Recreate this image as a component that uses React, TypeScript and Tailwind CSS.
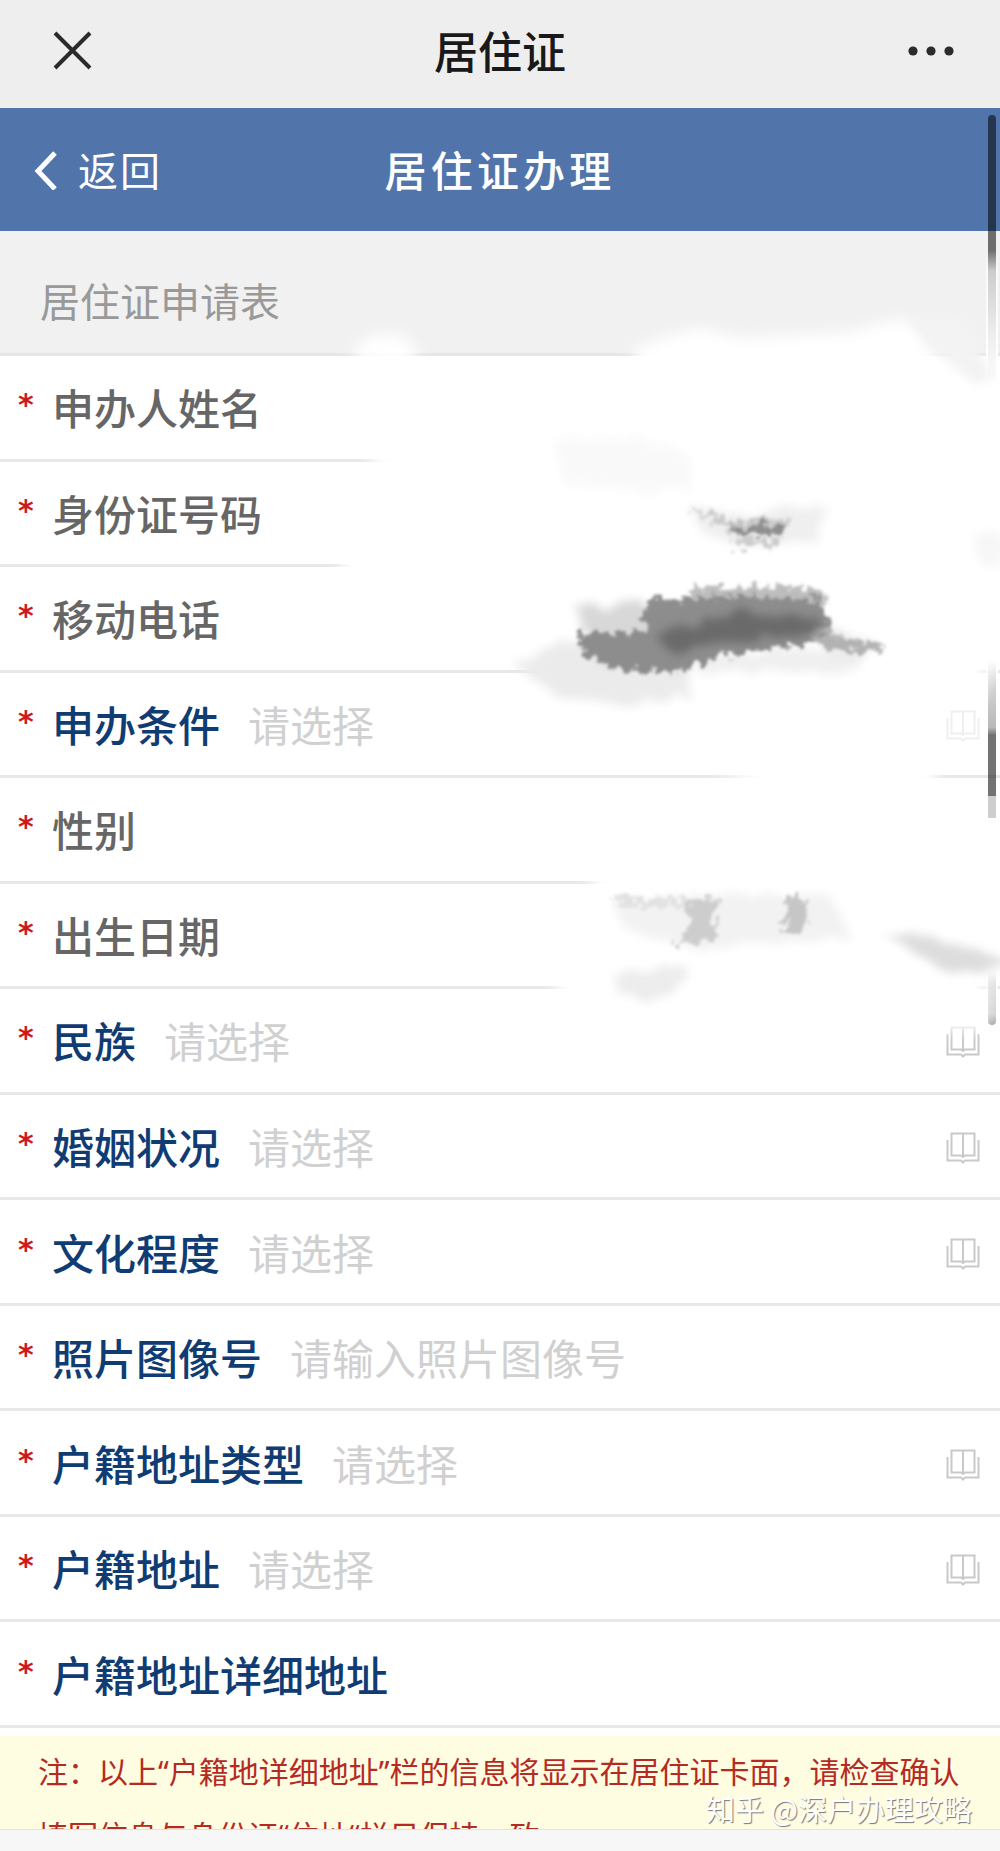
type Field = {
  id: string;
  label: string;
  kind: "readonly" | "select" | "text";
  placeholder?: string;
};

const fields: Field[] = [
  { id: "name", label: "申办人姓名", kind: "readonly" },
  { id: "idNumber", label: "身份证号码", kind: "readonly" },
  { id: "phone", label: "移动电话", kind: "readonly" },
  { id: "condition", label: "申办条件", kind: "select" },
  { id: "gender", label: "性别", kind: "readonly" },
  { id: "birthday", label: "出生日期", kind: "readonly" },
  { id: "nation", label: "民族", kind: "select" },
  { id: "marriage", label: "婚姻状况", kind: "select" },
  { id: "education", label: "文化程度", kind: "select" },
  {
    id: "photoNumber",
    label: "照片图像号",
    kind: "text",
    placeholder: "请输入照片图像号",
  },
  { id: "addressType", label: "户籍地址类型", kind: "select" },
  { id: "address", label: "户籍地址", kind: "select" },
  { id: "addressDetail", label: "户籍地址详细地址", kind: "text" },
];

const BookIcon = () => (
  <svg
    viewBox="0 0 34 32"
    className="mt-1 h-8 w-[34px] shrink-0"
    fill="none"
    stroke="#c9c9c9"
    strokeWidth="2"
    aria-hidden="true"
  >
    <path d="M5.5 1.5H28.5V23.5H19L17 25L15 23.5H5.5Z" />
    <path d="M17 1.5V25" />
    <path d="M1.5 8V28.5H15L17 30.5L19 28.5H32.5V8" />
  </svg>
);

const FieldRow = ({ field }: { field: Field }) => {
  const labelColor =
    field.kind === "readonly" ? "text-[#666666]" : "text-[#103c74]";

  return (
    <div className="flex min-h-24 flex-1 items-center border-b-3 border-[#e8e8e8] pl-[18px] pr-5">
      <span className="w-[34px] shrink-0 pb-1 font-['DejaVu_Sans',sans-serif] text-3xl font-bold text-[#cc1a1a]">
        *
      </span>
      <label
        htmlFor={field.id}
        className={`shrink-0 text-[42px] font-medium leading-none ${labelColor}`}
      >
        {field.label}
      </label>
      {field.kind === "select" ? (
        <select
          id={field.id}
          defaultValue=""
          className="ml-7 h-16 min-w-0 flex-1 appearance-none bg-transparent pb-0.5 text-[42px] text-[#d0d0d0] outline-none"
        >
          <option value="">请选择</option>
        </select>
      ) : (
        <input
          id={field.id}
          type="text"
          readOnly={field.kind === "readonly"}
          placeholder={field.placeholder}
          className="ml-7 h-16 min-w-0 flex-1 bg-transparent pb-0.5 text-[42px] text-[#666666] outline-none placeholder:text-[#d0d0d0]"
        />
      )}
      {field.kind === "select" && <BookIcon />}
    </div>
  );
};

/* Brush strokes that hide the applicant's personal data */
const BrushMarks = () => (
  <svg
    viewBox="0 0 1000 1851"
    preserveAspectRatio="none"
    className="pointer-events-none absolute inset-0 h-full w-full"
    aria-hidden="true"
  >
    <defs>
      <filter id="soft" x="-20%" y="-20%" width="140%" height="140%">
        <feGaussianBlur stdDeviation="7" />
      </filter>
      <filter id="haze" x="-20%" y="-30%" width="140%" height="160%">
        <feTurbulence type="fractalNoise" baseFrequency="0.05" numOctaves="3" />
        <feDisplacementMap in="SourceGraphic" scale="18" />
        <feGaussianBlur stdDeviation="5" />
      </filter>
      <filter id="rough" x="-20%" y="-30%" width="140%" height="160%">
        <feTurbulence type="fractalNoise" baseFrequency="0.12" numOctaves="4" />
        <feDisplacementMap
          in="SourceGraphic"
          scale="22"
          xChannelSelector="R"
          yChannelSelector="G"
        />
        <feGaussianBlur stdDeviation="1.6" />
      </filter>
      <linearGradient id="thumbFade" x1="0" y1="250" x2="0" y2="390" gradientUnits="userSpaceOnUse">
        <stop offset="0" stopColor="#fff" stopOpacity="0" />
        <stop offset="0.15" stopColor="#fff" stopOpacity="0.65" />
        <stop offset="0.6" stopColor="#fff" stopOpacity="0.88" />
        <stop offset="1" stopColor="#fff" />
      </linearGradient>
      <linearGradient id="thumbReturn" x1="0" y1="660" x2="0" y2="735" gradientUnits="userSpaceOnUse">
        <stop offset="0" stopColor="#fff" />
        <stop offset="0.4" stopColor="#fff" stopOpacity="0.65" />
        <stop offset="0.9" stopColor="#fff" stopOpacity="0.5" />
        <stop offset="1" stopColor="#fff" stopOpacity="0" />
      </linearGradient>
      <linearGradient id="thumbEnd" x1="0" y1="965" x2="0" y2="1026" gradientUnits="userSpaceOnUse">
        <stop offset="0" stopColor="#fff" />
        <stop offset="0.3" stopColor="#fff" stopOpacity="0.8" />
        <stop offset="0.8" stopColor="#fff" stopOpacity="0.7" />
        <stop offset="1" stopColor="#fff" stopOpacity="0.35" />
      </linearGradient>
    </defs>

    {/* White eraser */}
    <g fill="#fff" filter="url(#soft)">
      <path d="M640 372L632 350L660 338L700 328L740 338L850 332L900 318L918 328L930 350L960 365L980 372L985 392L1010 380V650L984 655V698H936V790H765L720 770L630 720L580 700L560 690L520 595H345L340 540L390 480L365 455L430 425L420 372Z" />
      <path d="M350 358L362 340L380 334L405 336L420 356L400 366Z" />
      <path d="M595 868H1010V965H984V1030H930L560 1000L550 965L590 900Z" />
      <path d="M982 830H1010V972H982Z" />
    </g>
    <rect x="986" y="250" width="12" height="140" fill="url(#thumbFade)" />
    <rect x="986" y="388" width="12" height="272" fill="#fff" />
    <rect x="986" y="660" width="12" height="75" fill="url(#thumbReturn)" />
    <rect x="986" y="796" width="12" height="22" fill="#fff" opacity="0.65" />
    <rect x="986" y="818" width="12" height="147" fill="#fff" />
    <rect x="986" y="965" width="12" height="61" fill="url(#thumbEnd)" />
    <rect x="940" y="705" width="44" height="45" fill="#fff" opacity="0.7" />

    {/* Pale smears */}
    <g filter="url(#haze)">
      <path d="M555 440L640 438L690 455L685 485L640 492L565 484Z" fill="#f9f9f9" />
      <path d="M905 315L965 318L990 375L975 385L935 350Z" fill="#f3f3f3" />
      <path d="M515 665L560 640L690 650V695L640 704L560 698Z" fill="#ebebeb" />
      <path d="M690 655L880 645L860 670L700 675Z" fill="#f0f0f0" />
      <path d="M975 535H1005V565H980Z" fill="#f7f7f7" />
      <path d="M612 902L700 896L830 895L850 938L700 948L625 930Z" fill="#f2f2f2" />
      <path d="M610 975L690 968L675 992L640 1000L620 994Z" fill="#ececec" />
      <path d="M880 930L930 938L970 948L1010 962L960 976L930 962Z" fill="#dddddd" />
      <path d="M690 508L750 514L826 502L820 540L740 548L700 530Z" fill="#efefef" />
      <path d="M576 608L640 600L690 650L600 665Z" fill="#d8d8d8" />
      <path d="M820 625L880 645L870 660L820 655Z" fill="#ececec" />
    </g>

    {/* Dark scribbles */}
    <g filter="url(#rough)">
      <path d="M690 508L740 520L790 518L786 532L738 536Z" fill="#cccccc" />
      <path d="M728 525L788 525L780 535L738 535Z" fill="#8e8e8e" />
      <path d="M734 538L780 540L778 547L736 547Z" fill="#cccccc" />
      <path d="M685 588L750 586L818 588L828 602L690 606Z" fill="#bdbdbd" />
      <path d="M578 634L645 630L644 600L760 596L822 600L832 640L720 656L680 672L620 670L584 656Z" fill="#8d8d8d" />
      <path d="M810 628L868 642L888 650L860 652L820 648Z" fill="#b2b2b2" />
      <path d="M684 900L716 898V940L672 946L690 925Z" fill="#cdcdcd" />
      <path d="M614 898L690 898L685 906L618 908Z" fill="#e2e2e2" />
      <path d="M788 898L808 898L802 936L782 934Z" fill="#c6c6c6" />
    </g>
    <path
      d="M655 635L740 612L816 616L820 632L740 642L670 652Z"
      fill="#6a6a6a"
      filter="url(#haze)"
    />
  </svg>
);

const App = () => {
  return (
    <div
      lang="zh-CN"
      className="relative flex min-h-screen flex-col overflow-hidden bg-white font-['Noto_Sans_CJK_SC',sans-serif]"
    >
      {/* Browser bar */}
      <header className="grid h-[108px] grid-cols-[1fr_auto_1fr] items-center bg-[#eeeeee] px-11">
        <button type="button" aria-label="关闭" className="justify-self-start">
          <svg viewBox="0 0 56 56" className="size-14" aria-hidden="true">
            <path d="M11 7L46 42M46 7L11 42" stroke="#2b2b2b" strokeWidth="4" />
          </svg>
        </button>
        <span className="pb-2 text-[44px] font-medium leading-none text-[#191919]">
          居住证
        </span>
        <button type="button" aria-label="更多" className="justify-self-end">
          <svg viewBox="0 0 50 56" className="h-14 w-[50px]" aria-hidden="true">
            <g fill="#2b2b2b">
              <circle cx="7" cy="25" r="4.6" />
              <circle cx="25" cy="25" r="4.6" />
              <circle cx="43" cy="25" r="4.6" />
            </g>
          </svg>
        </button>
      </header>

      {/* Page bar */}
      <nav className="grid h-[123px] grid-cols-[1fr_auto_1fr] items-center bg-[#5175ab] px-8 pb-0.5 text-white">
        <a
          href="#back"
          className="flex items-center gap-5 text-[40px] leading-none tracking-wider"
        >
          <svg viewBox="0 0 26 42" className="h-[42px] w-[26px]" aria-hidden="true">
            <path
              d="M23 5L6 23L23 41"
              fill="none"
              stroke="#fff"
              strokeWidth="5"
            />
          </svg>
          返回
        </a>
        <h1 className="text-[42px] font-medium leading-none tracking-widest">
          居住证办理
        </h1>
      </nav>

      <form className="flex flex-1 flex-col">
        <h2 className="flex h-[125px] items-center border-b-3 border-[#e6e6e6] bg-[#f1f1f1] px-10 pt-4 text-[40px] leading-none font-normal text-[#999999]">
          居住证申请表
        </h2>
        {fields.map((field) => (
          <FieldRow key={field.id} field={field} />
        ))}
      </form>

      {/* Note */}
      <div className="mt-2 h-[94px] overflow-hidden border-b border-[#e4e4d4] bg-[#fefce1] pl-[38px] pr-6 pt-1">
        <p className="font-['Noto_Sans','Noto_Sans_CJK_SC',sans-serif] text-3xl/[64px] text-[#b52a22]">
          注：以上“户籍地详细地址”栏的信息将显示在居住证卡面，请检查确认
          <br />
          填写信息与身份证“住址“栏目保持一致
        </p>
      </div>
      <div className="h-[21px] bg-[#f7f7f7]" />

      {/* Scroll thumb */}
      <div className="absolute right-1 top-[115px] h-[910px] w-2 rounded-full bg-black/55" />

      <BrushMarks />

      {/* Watermark */}
      <span className="absolute bottom-7 right-7 text-[29px] leading-none text-white [text-shadow:1px_1px_1px_#777777]">
        知乎 @深户办理攻略
      </span>
    </div>
  );
};

export default App;
